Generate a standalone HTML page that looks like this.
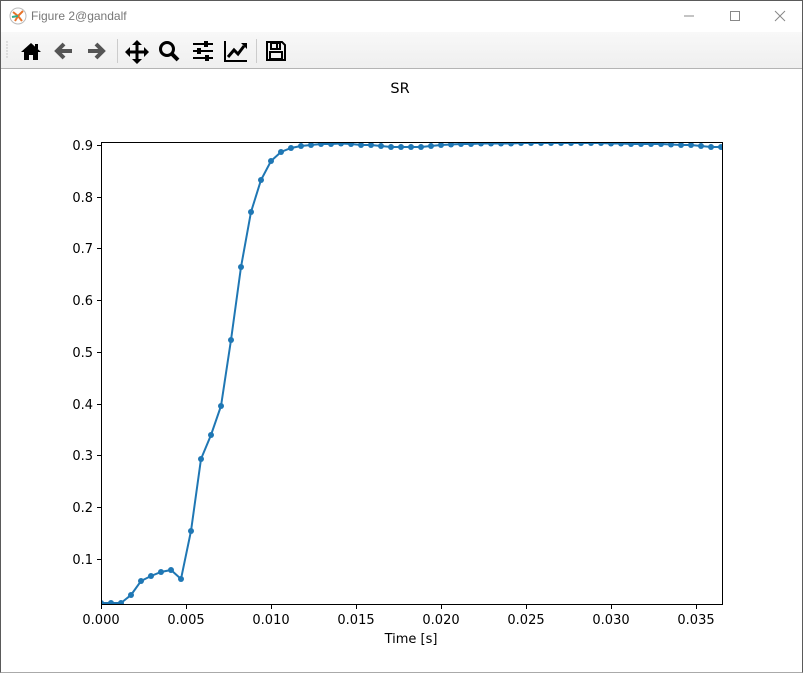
<!DOCTYPE html>
<html><head><meta charset="utf-8"><style>
html,body{margin:0;padding:0;width:803px;height:672px;overflow:hidden;background:#fff;font-family:"DejaVu Sans","Liberation Sans",sans-serif;}
.win{position:absolute;left:0;top:0;width:801px;height:671px;border:1px solid #5a5a5a;border-bottom:1px solid #aaa;background:#fff;}
.title{position:absolute;left:0;top:0;width:801px;height:30px;}
.title span{position:absolute;left:30px;top:8px;font:12px "Liberation Sans",sans-serif;color:#777;}
.tb{position:absolute;left:0;top:31px;width:801px;height:36px;background:linear-gradient(#f8f8f8,#efefef);border-bottom:1px solid #b4b4b4;}
.ic{position:absolute;top:8px;}
</style></head><body>
<div class="win">
<div class="title">
<svg style="position:absolute;left:8px;top:6px" width="18" height="18" viewBox="0 0 18 18"><circle cx="9" cy="9" r="8" fill="#fff" stroke="#bbb"/><path d="M9 9L4 5M9 9L14 4M9 9L13 14M9 9L6 14" stroke="#e8732a" stroke-width="2"/><path d="M9 9L3 10" stroke="#3a8" stroke-width="2"/></svg>
<span>Figure 2@gandalf</span>
<svg style="position:absolute;left:680px;top:8px" width="110" height="14"><line x1="3" y1="7" x2="13" y2="7" stroke="#888"/><rect x="49.5" y="2.5" width="9" height="9" fill="none" stroke="#888"/><path d="M94 2L104 12M104 2L94 12" stroke="#888"/></svg>
</div>
<div class="tb">
<svg class="ic" style="left:5px;top:8px" width="4" height="20"><g fill="#bbb"><circle cx="1" cy="2" r=".7"/><circle cx="1" cy="5" r=".7"/><circle cx="1" cy="8" r=".7"/><circle cx="1" cy="11" r=".7"/><circle cx="1" cy="14" r=".7"/><circle cx="1" cy="17" r=".7"/></g></svg>
<svg class="ic" style="left:19px" width="22" height="22" viewBox="0 0 22 22"><path d="M11 3L1 12h3v8h5v-5h4v5h5v-8h3z" fill="#000"/><rect x="15" y="4" width="3" height="5" fill="#000"/></svg>
<svg class="ic" style="left:52px" width="22" height="22" viewBox="0 0 22 22"><path d="M19 11H5M11 4L4 11l7 7" stroke="#555" stroke-width="4" fill="none"/></svg>
<svg class="ic" style="left:84px" width="22" height="22" viewBox="0 0 22 22"><path d="M3 11h14M11 4l7 7-7 7" stroke="#555" stroke-width="4" fill="none"/></svg>
<div style="position:absolute;left:116px;top:7px;width:1px;height:24px;background:#ccc"></div>
<svg class="ic" style="left:124px" width="24" height="24" viewBox="0 0 24 24"><path d="M12 2v20M2 12h20" stroke="#000" stroke-width="3"/><path d="M12 0l5 5H7zM12 24l5-5H7zM0 12l5-5v10zM24 12l-5-5v10z" fill="#000"/></svg>
<svg class="ic" style="left:157px" width="22" height="22" viewBox="0 0 22 22"><circle cx="9" cy="9" r="6.5" stroke="#000" stroke-width="3" fill="none"/><path d="M13.5 13.5L20 20" stroke="#000" stroke-width="4"/></svg>
<svg class="ic" style="left:191px" width="22" height="22" viewBox="0 0 22 22"><path d="M1 4h20M1 11h20M1 18h20" stroke="#000" stroke-width="2"/><rect x="12" y="1" width="4" height="6" fill="#000"/><rect x="5" y="8" width="4" height="6" fill="#000"/><rect x="13" y="15" width="4" height="6" fill="#000"/></svg>
<svg class="ic" style="left:223px" width="24" height="22" viewBox="0 0 24 22"><path d="M1 1v20h22" stroke="#000" stroke-width="2" fill="none"/><path d="M4 17l6-7 4 4 6-8" stroke="#000" stroke-width="3" fill="none"/><path d="M17 3h6v6z" fill="#000"/></svg>
<div style="position:absolute;left:255px;top:7px;width:1px;height:24px;background:#ccc"></div>
<svg class="ic" style="left:264px" width="22" height="22" viewBox="0 0 22 22"><path d="M2 2h15l3 3v15H2z" stroke="#000" stroke-width="2" fill="none"/><rect x="6" y="3" width="9" height="6" stroke="#000" stroke-width="2" fill="none"/><rect x="11" y="4" width="2" height="4" fill="#000"/><rect x="5" y="12" width="12" height="7" stroke="#000" stroke-width="2" fill="none"/></svg>
</div>
</div>
<svg style="position:absolute;left:0;top:0" width="803" height="672" font-family="DejaVu Sans, Liberation Sans, sans-serif" font-size="13">
<text x="400" y="93" text-anchor="middle" font-size="14.5">SR</text>
<rect x="101.5" y="142.5" width="621" height="462" fill="none" stroke="#000" stroke-width="1"/>
<g stroke="#000">
<line x1="97" y1="145.5" x2="101" y2="145.5"/><line x1="97" y1="197.5" x2="101" y2="197.5"/><line x1="97" y1="248.5" x2="101" y2="248.5"/><line x1="97" y1="300.5" x2="101" y2="300.5"/><line x1="97" y1="352.5" x2="101" y2="352.5"/><line x1="97" y1="404.5" x2="101" y2="404.5"/><line x1="97" y1="455.5" x2="101" y2="455.5"/><line x1="97" y1="507.5" x2="101" y2="507.5"/><line x1="97" y1="559.5" x2="101" y2="559.5"/>
<line x1="101.5" y1="605" x2="101.5" y2="609"/><line x1="186.5" y1="605" x2="186.5" y2="609"/><line x1="271.5" y1="605" x2="271.5" y2="609"/><line x1="356.5" y1="605" x2="356.5" y2="609"/><line x1="441.5" y1="605" x2="441.5" y2="609"/><line x1="526.5" y1="605" x2="526.5" y2="609"/><line x1="611.5" y1="605" x2="611.5" y2="609"/><line x1="696.5" y1="605" x2="696.5" y2="609"/>
</g>
<g text-anchor="end">
<text x="93" y="150">0.9</text><text x="93" y="202">0.8</text><text x="93" y="253">0.7</text><text x="93" y="305">0.6</text><text x="93" y="357">0.5</text><text x="93" y="409">0.4</text><text x="93" y="460">0.3</text><text x="93" y="512">0.2</text><text x="93" y="564">0.1</text>
</g>
<g text-anchor="middle">
<text x="101" y="624">0.000</text><text x="186" y="624">0.005</text><text x="271" y="624">0.010</text><text x="356" y="624">0.015</text><text x="441" y="624">0.020</text><text x="526" y="624">0.025</text><text x="611" y="624">0.030</text><text x="696" y="624">0.035</text>
<text x="411" y="643">Time [s]</text>
</g>
<svg x="101" y="142" width="622" height="463" viewBox="101 142 622 463" overflow="hidden">
<polyline id="L" fill="none" stroke="#1f77b4" stroke-width="2" points="101,603 111,603 121,603 131,595 141,581 151,576 161,572 171,570 181,579 191,531 201,459 211,435 221,406 231,340 241,267 251,212 261,180 271,161 281,152 291,148 301,146 311,145 321,144 331,144 341,143.5 351,144 361,145 371,145 381,146 391,147 401,147 411,147 421,147 431,146 441,145 451,144.5 461,144 471,144 481,143.5 491,143.5 501,143.5 511,143.5 521,143 531,143 541,143 551,143 561,143 571,143 581,143 591,143 601,143 611,143.5 621,143.5 631,144 641,144 651,144 661,144 671,144.5 681,145 691,145 701,146 711,147 721,147"/>
<g fill="#1f77b4">
<circle cx="101" cy="603" r="3"/><circle cx="111" cy="603" r="3"/><circle cx="121" cy="603" r="3"/><circle cx="131" cy="595" r="3"/><circle cx="141" cy="581" r="3"/><circle cx="151" cy="576" r="3"/><circle cx="161" cy="572" r="3"/><circle cx="171" cy="570" r="3"/><circle cx="181" cy="579" r="3"/><circle cx="191" cy="531" r="3"/><circle cx="201" cy="459" r="3"/><circle cx="211" cy="435" r="3"/><circle cx="221" cy="406" r="3"/><circle cx="231" cy="340" r="3"/><circle cx="241" cy="267" r="3"/><circle cx="251" cy="212" r="3"/><circle cx="261" cy="180" r="3"/><circle cx="271" cy="161" r="3"/><circle cx="281" cy="152" r="3"/><circle cx="291" cy="148" r="3"/><circle cx="301" cy="146" r="3"/><circle cx="311" cy="145" r="3"/><circle cx="321" cy="144" r="3"/><circle cx="331" cy="144" r="3"/><circle cx="341" cy="143.5" r="3"/><circle cx="351" cy="144" r="3"/><circle cx="361" cy="145" r="3"/><circle cx="371" cy="145" r="3"/><circle cx="381" cy="146" r="3"/><circle cx="391" cy="147" r="3"/><circle cx="401" cy="147" r="3"/><circle cx="411" cy="147" r="3"/><circle cx="421" cy="147" r="3"/><circle cx="431" cy="146" r="3"/><circle cx="441" cy="145" r="3"/><circle cx="451" cy="144.5" r="3"/><circle cx="461" cy="144" r="3"/><circle cx="471" cy="144" r="3"/><circle cx="481" cy="143.5" r="3"/><circle cx="491" cy="143.5" r="3"/><circle cx="501" cy="143.5" r="3"/><circle cx="511" cy="143.5" r="3"/><circle cx="521" cy="143" r="3"/><circle cx="531" cy="143" r="3"/><circle cx="541" cy="143" r="3"/><circle cx="551" cy="143" r="3"/><circle cx="561" cy="143" r="3"/><circle cx="571" cy="143" r="3"/><circle cx="581" cy="143" r="3"/><circle cx="591" cy="143" r="3"/><circle cx="601" cy="143" r="3"/><circle cx="611" cy="143.5" r="3"/><circle cx="621" cy="143.5" r="3"/><circle cx="631" cy="144" r="3"/><circle cx="641" cy="144" r="3"/><circle cx="651" cy="144" r="3"/><circle cx="661" cy="144" r="3"/><circle cx="671" cy="144.5" r="3"/><circle cx="681" cy="145" r="3"/><circle cx="691" cy="145" r="3"/><circle cx="701" cy="146" r="3"/><circle cx="711" cy="147" r="3"/><circle cx="721" cy="147" r="3"/>
</g>
</svg>
<rect x="101.5" y="142.5" width="621" height="462" fill="none" stroke="#000" stroke-width="1"/>
</svg>
</body></html>
